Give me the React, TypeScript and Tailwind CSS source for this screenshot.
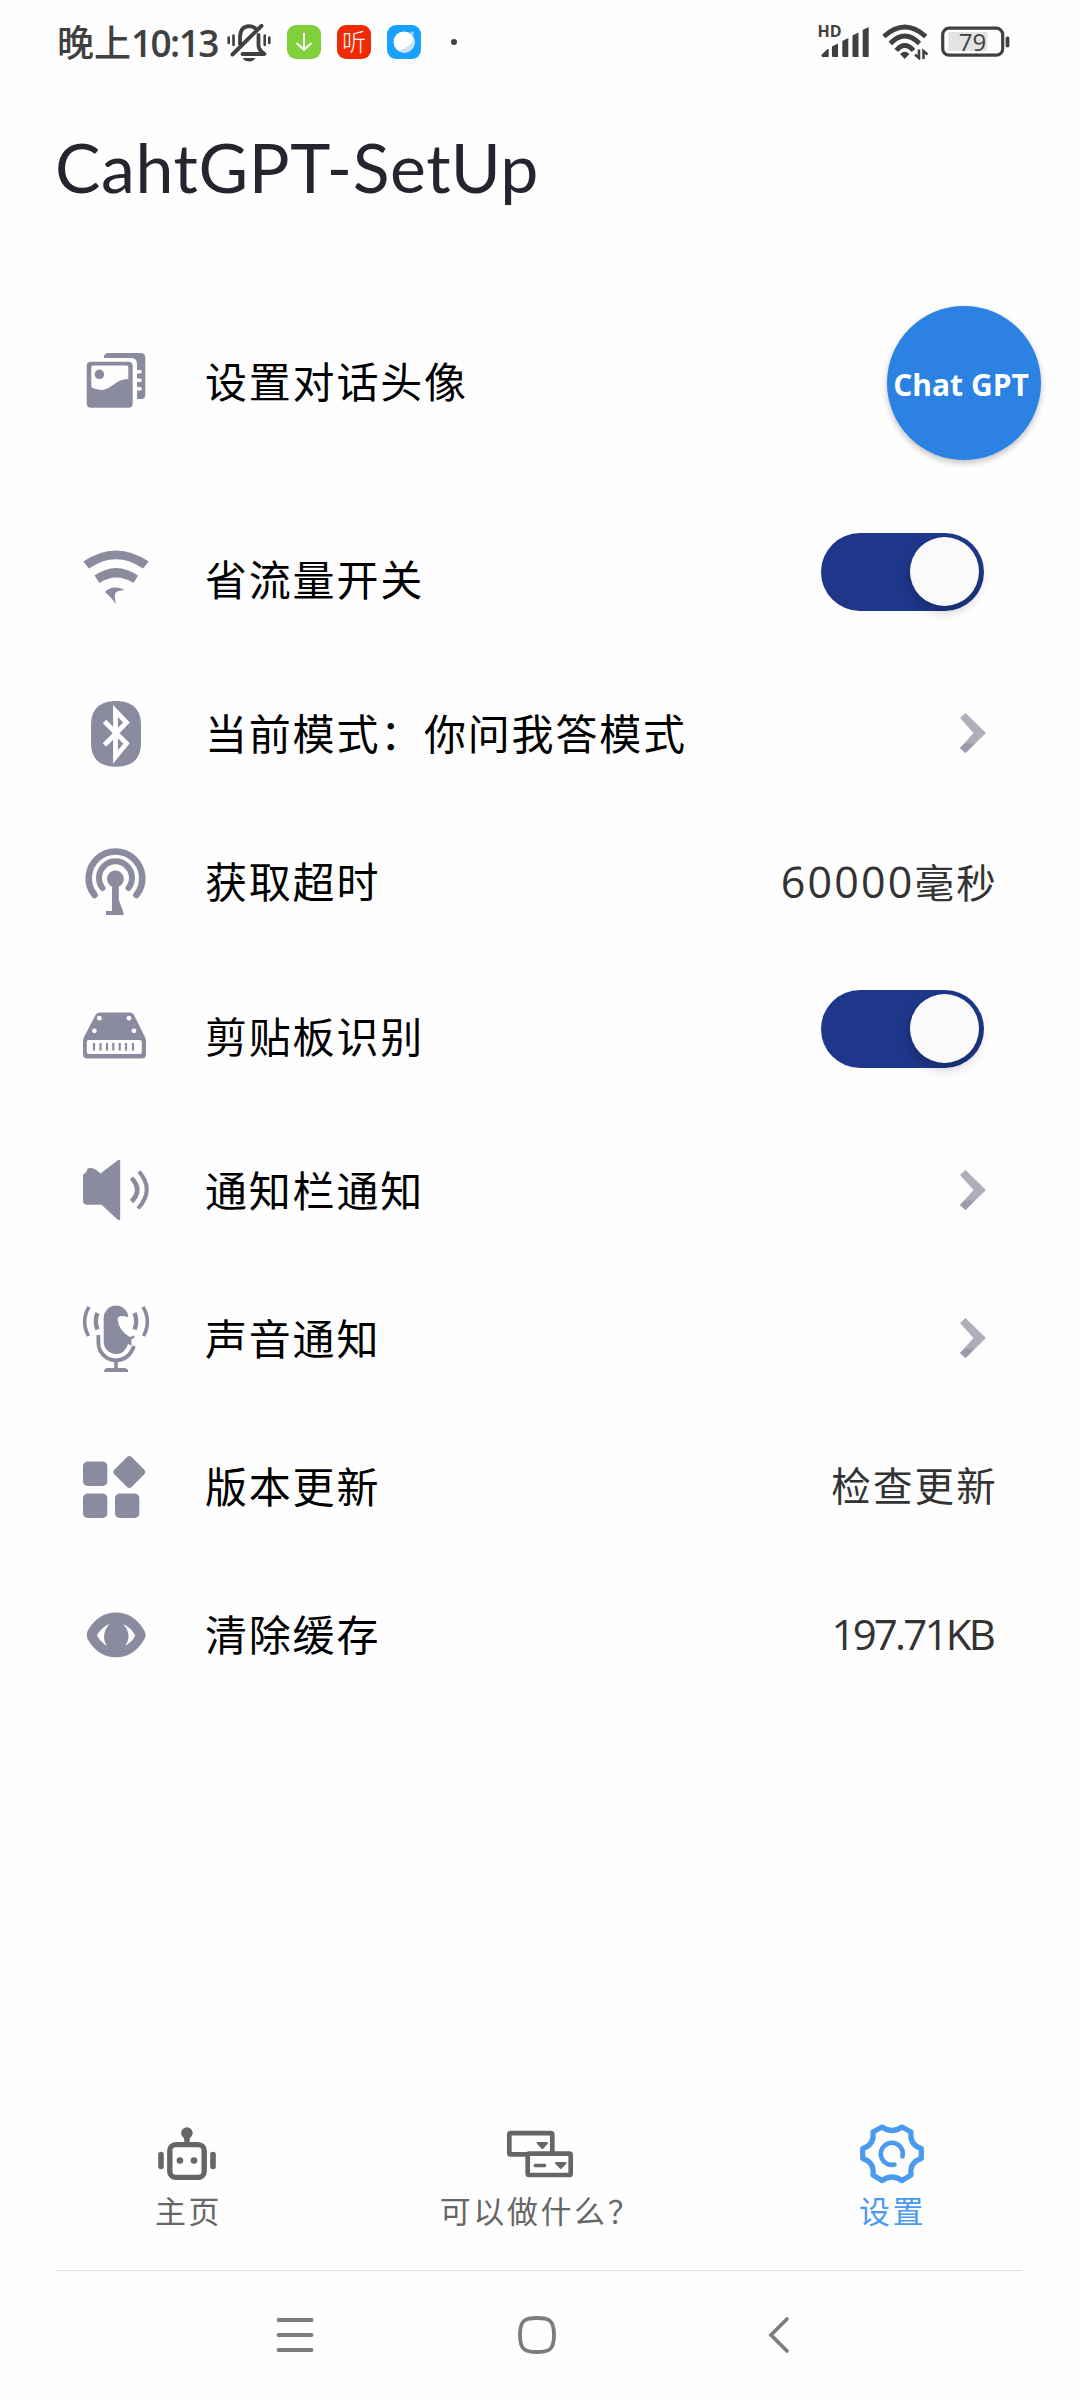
import React from "react";

type IconProps = { children: React.ReactNode };

const RowIcon = ({ children }: IconProps) => (
  <svg
    viewBox="0 0 66 66"
    className="h-[66px] w-[66px] shrink-0 overflow-visible text-[#8b8b9f]"
    fill="currentColor"
  >
    {children}
  </svg>
);

const PictureIcon = () => (
  <RowIcon>
    <path d="M20.7 9 Q21 4 25.5 4 H57.5 Q62.3 4 62.3 9 V46 Q62.3 50 58 50 H54 V15 Q54 9 48.5 9 Z" />
    <path
      d="M53 22 H57 M53 30.5 H57 M53 39 H57"
      transform="translate(0 .8)"
      stroke="#fefefe"
      strokeWidth="3.6"
      strokeLinecap="round"
    />
    <path
      fillRule="evenodd"
      d="M8 12.7 H45.5 Q49.7 12.7 49.7 17 V54.5 Q49.7 58.7 45.5 58.7 H8 Q3.7 58.7 3.7 54.5 V17 Q3.7 12.7 8 12.7 Z M10 16.5 Q8.3 16.5 8.3 18.5 V38.3 Q14 41.5 20 41 Q25 40 30 36 Q37 30 45.3 30 V18.5 Q45.3 16.5 43.5 16.5 Z"
    />
    <circle cx="16.4" cy="25.3" r="4.8" />
  </RowIcon>
);

const WifiIcon = () => (
  <RowIcon>
    <path d="M0.3 14.5 Q33 -7.5 65.7 14.5 L60 21.5 Q33 3 6 21.5 Z" />
    <path d="M11.5 28.5 Q33 13.5 55 28.5 L50.5 36 Q33 25 16.5 36 Z" />
    <path d="M22 45 Q26 40.5 32 40.5 Q38 40.5 41.5 43.3 Q33 43 32 47.5 Q31.5 51 32.8 57.5 Q30 52 22 45 Z" />
  </RowIcon>
);

const BluetoothIcon = () => (
  <RowIcon>
    <path d="M33 0 C49 0 58 8 58 24 V42 C58 58 49 65.8 33 65.8 C17 65.8 8 58 8 42 V24 C8 8 17 0 33 0 Z" />
    <path
      d="M21.5 20.5 L43.5 42.5 L32.5 56 V10 L43.5 21.5 L21.5 44"
      fill="none"
      stroke="#fefefe"
      strokeWidth="4.8"
    />
  </RowIcon>
);

const AntennaIcon = () => (
  <RowIcon>
    <g fill="none" stroke="currentColor" strokeLinecap="round">
      <path d="M11.5 46 A26.8 26.8 0 1 1 53.5 46" strokeWidth="6.6" />
      <path d="M19.5 39 A16.5 16.5 0 1 1 45.5 39" strokeWidth="6" />
    </g>
    <circle cx="32.4" cy="30" r="8.4" />
    <path d="M29 34 H35.8 V51 L40 62 L40.7 66 H23 V62 H29 Z" />
  </RowIcon>
);

const DriveIcon = () => (
  <RowIcon>
    <path
      fillRule="evenodd"
      d="M12 12 Q13.5 8.5 17 8.5 H47 Q50 8.5 51.5 12 L62 33 Q63 35 63 37 V50 Q63 54.5 58.5 54.5 H4.5 Q0 54.5 0 50 V37 Q0 35 1 33 Z M5.5 36 Q3.8 36 3.8 38 V48 Q3.8 50 5.5 50 H57 Q58.8 50 58.8 48 V38 Q58.8 36 57 36 Z"
    />
    <path
      d="M11 39 V46.5 M17.5 39 V46.5 M24 39 V46.5 M30.3 39 V46.5 M36.7 39 V46.5 M43 39 V46.5 M50 39 V46.5"
      stroke="currentColor"
      strokeWidth="2.2"
    />
    <g fill="#fefefe">
      <circle cx="16.4" cy="14.2" r="2.4" />
      <circle cx="46" cy="14.2" r="2.4" />
      <circle cx="11.4" cy="26.8" r="2.4" />
      <circle cx="51" cy="26.8" r="2.4" />
    </g>
  </RowIcon>
);

const SpeakerIcon = () => (
  <RowIcon>
    <path d="M0 16.5 Q4 14.5 4.5 10.5 Q10 8.5 17.5 15.5 L34.5 2.5 Q37.2 0.8 37.2 3.5 V60.5 Q37.2 63.5 34.5 61.5 L18.5 46.8 H4 Q0 46.8 0 43 Z" />
    <g fill="none" stroke="currentColor">
      <path d="M48.5 20 Q60 32 48.5 43.5" strokeWidth="4.6" />
      <path d="M56 13.5 Q72 32 55 50.5" strokeWidth="4" />
    </g>
  </RowIcon>
);

const MicIcon = () => (
  <RowIcon>
    <path d="M20.7 12.5 A12.3 12.3 0 0 1 45.3 11.3 Q35 8 34.6 13.5 Q36 25 47 31 L51.5 29.5 V32 L48.5 33 V39.5 L45 38 Q42 48 33 48 A12.3 12.3 0 0 1 20.7 36 Z" />
    <path d="M21 66 Q21 62 25 62 H41 Q45.3 62 45.3 66 Z" />
    <g fill="none" stroke="currentColor">
      <path d="M15.4 29 V36.5 A17.5 17.5 0 0 0 33 54.3 Q46 54 51 40" strokeWidth="3.8" />
      <path d="M33 54 V63" strokeWidth="3.6" />
      <path d="M6 0.8 Q-2.5 15 5.5 30 M60 0.8 Q68.5 15 60.5 30" strokeWidth="3.6" />
      <path d="M14.5 7 Q11 15 14.5 23.5 M51.5 7 Q55 15 51.5 23.5" strokeWidth="4.4" />
    </g>
  </RowIcon>
);

const GridIcon = () => (
  <RowIcon>
    <rect x="0" y="7.6" width="24.3" height="24.3" rx="4.5" />
    <rect x="0" y="39.6" width="24.3" height="24.3" rx="4.5" />
    <rect x="32" y="39.6" width="24.3" height="24.3" rx="4.5" />
    <rect x="34.1" y="5.8" width="24.4" height="24.4" rx="3.6" transform="rotate(45 46.3 18)" />
  </RowIcon>
);

const EyeIcon = () => (
  <RowIcon>
    <path d="M4.5 29 Q15 10.4 33 10.4 Q51 10.4 61.5 29 Q63.5 33 61.5 37 Q51 55.3 33 55.3 Q15 55.3 4.5 37 Q2.8 33 4.5 29 Z" />
    <g fill="#fefefe">
      <path d="M26.5 22 Q18 25.5 14 33.5 Q17.5 40 24 44 Q17 33 26.5 22 Z" />
      <path d="M40 22 Q48 25.5 52.3 33.5 Q49 40 42 44 Q50 33 40 22 Z" />
    </g>
  </RowIcon>
);

const Chevron = () => (
  <svg viewBox="0 0 26 40" className="mr-[94px] mb-[3px] h-10 w-[26px]">
    <path d="M5.5 0 L26 20 L5.5 40 L0 35 L13.5 20 L0 5 Z" fill="#afafbb" />
    <path d="M4.5 30.5 H15 L5.5 40 L0 35 Z" fill="#9b9bad" />
  </svg>
);

const Toggle = () => (
  <div className="mr-24 mb-[15px] flex h-[78px] w-[163px] items-center justify-end rounded-full bg-[#1e378b] pr-[5px] pb-[2px]">
    <div className="h-[69px] w-[69px] rounded-full bg-[#fafafa] shadow-[0_6px_12px_rgba(0,0,0,0.22)]" />
  </div>
);

const ValueText = ({ children }: { children: React.ReactNode }) => (
  <span className="mr-[82px] pb-px text-[39.5px] leading-none tracking-[2.2px] whitespace-nowrap text-[#333]">
    {children}
  </span>
);

const Avatar = () => (
  <div className="mt-0.5 mr-[39px] flex h-[154px] w-[154px] items-center justify-center rounded-full bg-[#2c82e2] pt-0.5 pr-1.5 shadow-[0_3px_6px_rgba(0,0,0,0.25)]">
    <span className="text-[30px] font-bold whitespace-nowrap text-white">Chat GPT</span>
  </div>
);

type RowProps = {
  icon: React.ReactNode;
  label: string;
  className?: string;
  children: React.ReactNode;
};

const SettingRow = ({ icon, label, className = "h-[148px]", children }: RowProps) => (
  <div className={`flex items-center pl-[83px] ${className}`}>
    {icon}
    <span className="ml-[56px] flex-1 text-[42px] leading-none tracking-[1.8px] text-black">
      {label}
    </span>
    {children}
  </div>
);

const StatusBar = () => (
  <div className="flex h-[84px] items-center justify-between pr-[68px] pl-[57px] text-[#404040]">
    <div className="flex items-center">
      <span className="w-[170px] text-[37px] leading-none font-medium whitespace-nowrap">
        晚上<span className="font-semibold tracking-[-1.6px]">10:13</span>
      </span>
      <svg viewBox="0 0 44 40" className="h-10 w-11" fill="none" stroke="currentColor">
        <path d="M13 23 V15 Q13.5 4.5 22 4.2 Q26 4.2 29 7" strokeWidth="3.8" />
        <path
          d="M31.5 13 V24 Q32 28 37.5 32 H15.5"
          strokeWidth="3.8"
          strokeLinecap="round"
          strokeLinejoin="round"
        />
        <path d="M5.5 32.5 L34.5 3.8" strokeWidth="4" strokeLinecap="round" />
        <path
          d="M1.7 15.5 V21 M6.5 13.5 V23 M37.7 13.5 V23 M42.3 15.5 V21"
          strokeWidth="2.6"
          strokeLinecap="round"
        />
        <path d="M15.5 36 H28.5 Q26 39.5 22 39.5 Q18 39.5 15.5 36 Z" fill="currentColor" stroke="none" />
      </svg>
      <div className="ml-4 flex h-[34px] w-[34px] items-center justify-center rounded-[9px] bg-[#7fd03c]">
        <svg viewBox="0 0 18 20" className="h-5 w-[18px]" fill="none" stroke="#fff" strokeWidth="2">
          <path d="M9 1 V18 M1.5 11 L9 18 L16.5 11" />
        </svg>
      </div>
      <div className="ml-4 flex h-[34px] w-[34px] items-center justify-center rounded-[9px] bg-[#f12a06]">
        <span className="text-[24px] leading-none font-light text-white">听</span>
      </div>
      <div className="ml-4 flex h-[34px] w-[34px] items-center justify-center rounded-[9px] bg-[#18a2fd]">
        <svg viewBox="0 0 24 24" className="h-6 w-6">
          <circle cx="12" cy="12" r="10.5" fill="#fff" />
          <path d="M22 8 A10.5 10.5 0 0 1 6 20.5 Q18 18 22 8 Z" fill="#cfe3f5" />
          <path d="M17 2 L22 1.5 L21.5 7 Z" fill="#8fd0fb" />
        </svg>
      </div>
      <div className="ml-[30px] h-[6px] w-[6px] rounded-full bg-[#404040]" />
    </div>
    <div className="flex items-center">
      <svg viewBox="0 0 51 36" className="h-9 w-[51px] overflow-visible" fill="currentColor">
        <text x="-1.5" y="13" fontSize="16" fontWeight="700">
          HD
        </text>
        <path d="M2.3 31 L8.5 25 H9.7 V33 H3.5 Q2.3 33 2.3 31 Z" />
        <path d="M13 22.5 L19 19.5 V33 H14 Q13 33 13 32 Z" />
        <path d="M23.3 17 L29.3 14 V33 H24.3 Q23.3 33 23.3 32 Z" />
        <path d="M33.5 11.5 L39.5 8.5 V33 H34.5 Q33.5 33 33.5 32 Z" />
        <path d="M43.7 6 L49.7 3 V33 H44.7 Q43.7 33 43.7 32 Z" />
      </svg>
      <svg viewBox="0 0 46 36" className="ml-3 h-9 w-[46px]" fill="none" stroke="currentColor">
        <g strokeWidth="4.8">
          <path d="M1.8 12.5 Q22.7 -6.5 43.8 12.5" />
          <path d="M8.3 19.5 Q22.7 4.5 37.5 19.5" />
          <path d="M14.3 26.5 Q22.7 16.5 31.5 26.5" />
        </g>
        <path d="M18 30 Q22.7 25.5 27.5 30 L22.7 35 Z" fill="currentColor" stroke="none" />
        <path d="M37 25.5 V34 L33 30.5 M41.5 35 V27 L45.5 30.5" strokeWidth="2.6" />
      </svg>
      <svg viewBox="0 0 70 34" className="mr-px ml-[13px] h-[34px] w-[70px]">
        <rect x="7.3" y="7" width="39" height="19" fill="#e3e3e3" />
        <rect
          x="1.7"
          y="3.2"
          width="60"
          height="27"
          rx="6.5"
          fill="none"
          stroke="currentColor"
          strokeWidth="3.2"
        />
        <path d="M66.5 13.5 V20.5" stroke="currentColor" strokeWidth="3.8" strokeLinecap="round" />
        <text x="31.5" y="25.5" fontSize="24" textAnchor="middle" fontWeight="500" fill="currentColor">
          79
        </text>
      </svg>
    </div>
  </div>
);

const RobotIcon = () => (
  <svg viewBox="0 0 64 62" className="mr-0.5 h-[62px] w-16" fill="currentColor">
    <rect x="14.8" y="19.6" width="34.4" height="32.8" rx="6" fill="none" stroke="currentColor" strokeWidth="5.4" />
    <circle cx="31.9" cy="8" r="5.8" />
    <path d="M28.5 10 L29.5 18 H34.3 L35.3 10 Z" />
    <circle cx="24.9" cy="35.5" r="3.3" />
    <circle cx="39" cy="35.5" r="3.3" />
    <path d="M6 29.5 V41.5 M58 29.5 V41.5" stroke="currentColor" strokeWidth="5.6" strokeLinecap="round" />
  </svg>
);

const PanelsIcon = () => (
  <svg viewBox="0 0 68 62" className="h-[62px] w-[68px]" fill="currentColor">
    <g fill="#fefefe" stroke="currentColor" strokeWidth="4.7">
      <rect x="3.3" y="8.1" width="43" height="21.3" rx="1.5" />
      <rect x="21.7" y="28.7" width="43" height="21.3" rx="1.5" />
    </g>
    <g stroke="currentColor" strokeWidth="2" strokeLinejoin="round">
      <path d="M31.7 18 H41 L36.4 23 Z" />
      <path d="M50 38 H59.5 L54.8 43 Z" />
    </g>
    <path d="M29.3 40.5 H38.6" stroke="currentColor" strokeWidth="3.4" strokeLinecap="round" />
  </svg>
);

const GearIcon = () => (
  <svg
    viewBox="0 -4 66 62"
    className="h-[62px] w-[66px] overflow-visible"
    fill="none"
    stroke="currentColor"
    strokeLinejoin="round"
    strokeLinecap="round"
  >
    <g transform="translate(0 -4)">
      <path
        d="M23 2 Q33 9 43 2 L52 7 C51 15 54 21 62.3 23.5 V33.5 C54 36 51 42 52 50 L43 55.5 Q33 48.5 23 55.5 L14 50 C15 42 12 36 3.7 33.5 V23.5 C12 21 15 15 14 7 Z"
        strokeWidth="5.2"
      />
      <path d="M43.5 31.5 A11 11 0 1 0 35.5 39.5" strokeWidth="4.6" />
    </g>
  </svg>
);

type TabProps = { icon: React.ReactNode; label: string; active?: boolean };

const TabItem = ({ icon, label, active = false }: TabProps) => (
  <div
    className={`flex flex-1 flex-col items-center ${active ? "text-[#4a9bf0]" : "text-[#666]"}`}
  >
    {icon}
    <span className="mt-[9px] pl-px text-[31px] leading-none tracking-[2.6px]">{label}</span>
  </div>
);

const SystemNav = () => (
  <div className="flex h-[129px] items-center pb-px pl-[173.5px] text-[#7c7c7c]">
    <div className="flex w-[242px] justify-center">
      <svg viewBox="0 0 38 38" className="h-[38px] w-[38px]" stroke="currentColor" strokeWidth="3.8" strokeLinecap="round">
        <path d="M2.5 4 H35.5 M2.5 19 H35.5 M2.5 34 H35.5" />
      </svg>
    </div>
    <div className="flex w-[242px] justify-center">
      <svg viewBox="0 0 38 38" className="h-[38px] w-[38px]" fill="none" stroke="currentColor" strokeWidth="3.8">
        <path d="M19 2 C31 2 36 4 36 19 C36 34 31 36 19 36 C7 36 2 34 2 19 C2 4 7 2 19 2 Z" />
      </svg>
    </div>
    <div className="flex w-[242px] justify-center">
      <svg viewBox="0 0 22 38" className="h-[38px] w-[22px]" fill="none" stroke="currentColor" strokeWidth="3.6" strokeLinecap="round">
        <path d="M19 3 L3 19 L19 35" />
      </svg>
    </div>
  </div>
);

export default function App() {
  return (
    <div
      lang="zh-CN"
      className="flex h-[2400px] w-[1080px] flex-col overflow-hidden bg-[#fefefe] font-['Open_Sans','Noto_Sans_CJK_SC',sans-serif]"
    >
      <StatusBar />
      <h1 className="h-[181px] pt-[47px] pl-[55px] font-['Lato',sans-serif] text-[68px] leading-[72px] tracking-[0.6px] text-[#25252f]">
        CahtGPT-SetUp
      </h1>

      <div className="flex-1">
        <SettingRow icon={<PictureIcon />} label="设置对话头像" className="h-[234px]">
          <Avatar />
        </SettingRow>
        <SettingRow icon={<WifiIcon />} label="省流量开关" className="h-[161px]">
          <Toggle />
        </SettingRow>
        <SettingRow icon={<BluetoothIcon />} label="当前模式：你问我答模式">
          <Chevron />
        </SettingRow>
        <SettingRow icon={<AntennaIcon />} label="获取超时">
          <ValueText>
            <span className="text-[43px]">60000</span>毫秒
          </ValueText>
        </SettingRow>
        <SettingRow icon={<DriveIcon />} label="剪贴板识别" className="h-[161px]">
          <Toggle />
        </SettingRow>
        <SettingRow icon={<SpeakerIcon />} label="通知栏通知">
          <Chevron />
        </SettingRow>
        <SettingRow icon={<MicIcon />} label="声音通知">
          <Chevron />
        </SettingRow>
        <SettingRow icon={<GridIcon />} label="版本更新">
          <ValueText>检查更新</ValueText>
        </SettingRow>
        <SettingRow icon={<EyeIcon />} label="清除缓存">
          <ValueText>
            <span className="mr-[5px] text-[42px] tracking-[-2.8px]">197.71KB</span>
          </ValueText>
        </SettingRow>
      </div>

      <div className="flex h-[145px] px-3">
        <TabItem icon={<RobotIcon />} label="主页" />
        <TabItem icon={<PanelsIcon />} label="可以做什么？" />
        <TabItem icon={<GearIcon />} label="设置" active />
      </div>
      <div className="mr-[58px] ml-[55px] h-px bg-[#dedede]" />
      <SystemNav />
    </div>
  );
}
